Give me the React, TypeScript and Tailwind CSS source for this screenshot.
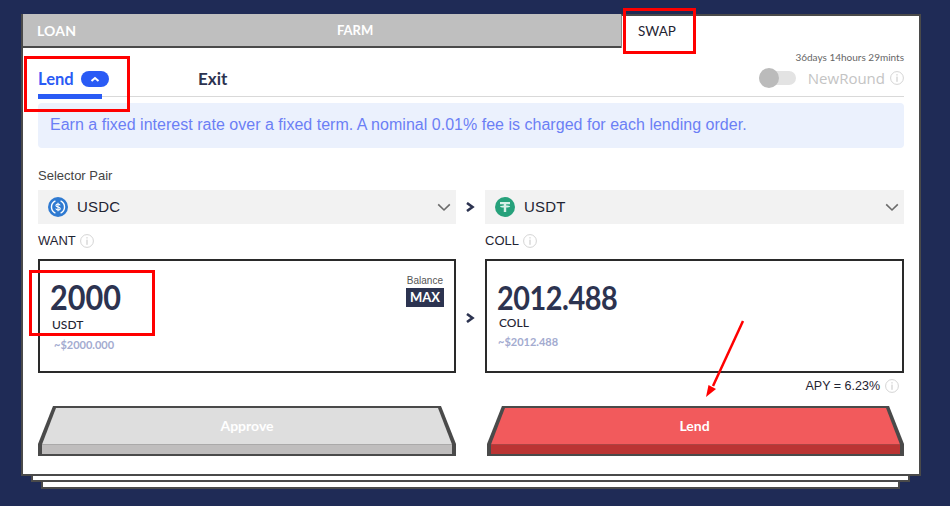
import React from "react";

const Info = ({ c = "#cfcfcf", s = 14 }: { c?: string; s?: number }) => (
  <svg width={s} height={s} viewBox="0 0 14 14" fill="none" className="shrink-0">
    <circle cx="7" cy="7" r="6.4" stroke={c} strokeWidth="0.9" />
    <rect x="6.4" y="5.6" width="1.2" height="5.2" fill={c} />
    <rect x="6.4" y="3.2" width="1.2" height="1.3" fill={c} />
  </svg>
);

const Chev = () => (
  <svg width="12" height="10" viewBox="0 0 12 10" className="shrink-0">
    <path d="M2 1 L7.5 5 L2 9" fill="none" stroke="#2c3350" strokeWidth="2.6" />
  </svg>
);

const Down = () => (
  <svg width="14" height="9" viewBox="0 0 14 9">
    <path d="M1.2 1.4 L7 7 L12.8 1.4" fill="none" stroke="#6b6b6b" strokeWidth="1.6" />
  </svg>
);

const Usdc = () => (
  <svg width="20" height="20" viewBox="0 0 20 20">
    <circle cx="10" cy="10" r="10" fill="#2f7ad1" />
    <path d="M7.4 3.9a6.7 6.7 0 0 0 0 12.2M12.6 3.9a6.7 6.7 0 0 1 0 12.2" fill="none" stroke="#fff" strokeWidth="1.4" />
    <path d="M12.1 8.4c-.2-1-1-1.4-2.1-1.4-1.2 0-2.1.6-2.1 1.5 0 2.1 4.3 1 4.3 3 0 1-1 1.500-2.200 1.500s-2-.5-2.200-1.500M10 5.800v8.400" fill="none" stroke="#fff" strokeWidth="1.1" />
  </svg>
);

const Usdt = () => (
  <svg width="20" height="20" viewBox="0 0 20 20">
    <circle cx="10" cy="10" r="10" fill="#26a17b" />
    <path d="M5 5h10v2.2h-3.8v1.2c2.2.1 3.9.6 3.9 1.1s-1.7 1-3.9 1.1V15H8.800v-4.400C6.600 10.500 4.900 10 4.900 9.500s1.700-1 3.900-1.100V7.200H5z" fill="#d8f0e8" />
  </svg>
);

const Select = ({ icon, label }: { icon: React.ReactNode; label: string }) => (
  <div className="h-[34px] bg-[#f2f2f2] flex items-center pl-[10px] pr-[5px]">
    {icon}
    <span className="ml-[9px] text-[15px] tracking-[0.2px] text-[#1f2433] flex-1">{label}</span>
    <Down />
  </div>
);

const Btn = ({ label, top, side, cls }: { label: string; top: string; side: string; cls: string }) => (
  <div className="relative h-[50px] flex items-start justify-center">
    <svg viewBox="0 0 418 50" preserveAspectRatio="none" className="absolute inset-0 w-full h-full">
      <path d="M0 38 L15 0 L403 0 L418 38 L418 50 L0 50 Z" fill="#4a4a4a" />
      <path d="M4 38.500 L18 2 L400 2 L414 38.500 Z" fill={top} />
      <rect x="4" y="38.500" width="410" height="9.500" fill={side} />
    </svg>
    <span className={`relative mt-[9px] text-[14px] font-bold text-white ${cls}`} style={{ fontFamily: "Lato, sans-serif" }}>{label}</span>
  </div>
);

export default function App() {
  return (
    <div className="relative w-[950px] h-[506px] overflow-hidden bg-[#1f2b56] pt-[14px] pl-[21px]" style={{ fontFamily: '"Liberation Sans", sans-serif' }}>
      <div className="absolute left-[41px] top-[40px] w-[859px] h-[449px] bg-white border-2 border-[#4a4a4a]" />
      <div className="absolute left-[31px] top-[30px] w-[879px] h-[452px] bg-white border-2 border-[#4a4a4a]" />

      <div className="relative w-[900px] h-[462px] bg-white border-x-2 border-b-2 border-[#4a4a4a]">
        <div className="flex h-[34px] -mx-[2px] pl-[2px]" style={{ fontFamily: "Lato, sans-serif" }}>
          <div className="w-[298px] pl-[14px] bg-[#bfbfbf] border-b-2 border-[#4a4a4a] text-white text-[14px] font-bold tracking-[0.2px] leading-[33px]">LOAN</div>
          <div className="w-[300px] pl-[16px] bg-[#bfbfbf] border-b-2 border-[#4a4a4a] text-white text-[13px] font-bold leading-[33px]">FARM</div>
          <div className="flex-1 pl-[16px] bg-white border-t-2 border-r-2 border-l border-[#4a4a4a] border-l-[#8a8a8a] text-[#1f2433] text-[13.500px] leading-[31px]">SWAP</div>
        </div>

        <div className="pl-[15px] pr-[15px]">
          <div className="relative h-[49px] border-b border-[#d9d9d9] flex items-start" style={{ fontFamily: "Lato, sans-serif" }}>
            <div className="w-[64px] h-[51px] pt-[21px] border-b-[5px] border-[#2a5bf5] flex items-start shrink-0">
              <span className="text-[16.500px] font-bold leading-[20px] text-[#2a5bf5]">Lend</span>
              <span className="ml-[7px] shrink-0 w-[28px] h-[16px] mt-[2px] rounded-full bg-[#2a5bf5] flex items-center justify-center">
                <svg width="10" height="7" viewBox="0 0 10 7"><path d="M1.500 5 L5 2 L8.500 5" fill="none" stroke="#fff" strokeWidth="2" /></svg>
              </span>
            </div>
            <span className="ml-[96px] pt-[21px] text-[17px] font-bold leading-[20px] text-[#2c3350]">Exit</span>
            <div className="ml-auto flex flex-col items-end">
              <span className="text-[10px] leading-[12px] mt-[3px] text-[#666]">36days 14hours 29mints</span>
              <div className="flex items-center mt-[5px]">
                <div className="relative w-[37px] h-[14px] rounded-full bg-[#e3e3e3]">
                  <div className="absolute left-0 -top-[3px] w-[20px] h-[20px] rounded-full bg-[#bbbbbb]" />
                </div>
                <span className="ml-[12px] text-[15px] leading-[20px] text-[#c4c4c4]" style={{ fontFamily: '"Open Sans", sans-serif' }}>NewRound</span>
                <span className="ml-[5px]"><Info /></span>
              </div>
            </div>
          </div>

          <div className="mt-[6px] h-[45px] rounded-[4px] bg-[#ebf1fd] pl-[12px] text-[16px] leading-[43px] tracking-[0.02px] text-[#6b7ff5]">
            Earn a fixed interest rate over a fixed term. A nominal 0.01% fee is charged for each lending order.
          </div>

          <div className="mt-[21px] text-[13px] leading-[14px] text-[#444]">Selector Pair</div>

          <div className="mt-[7px] grid grid-cols-[418px_29px_419px] items-center">
            <Select icon={<Usdc />} label="USDC" />
            <div className="flex justify-center"><Chev /></div>
            <Select icon={<Usdt />} label="USDT" />
          </div>

          <div className="mt-[7px] h-[18px] grid grid-cols-[418px_29px_419px] items-center text-[13px] text-[#1f2433]">
            <div className="flex items-center gap-[4px]">WANT <Info /></div>
            <div />
            <div className="flex items-center gap-[4px]">COLL <Info /></div>
          </div>

          <div className="mt-[10px] grid grid-cols-[418px_29px_419px] items-center">
            <div className="relative h-[114px] border-2 border-[#2a2a2a] pl-[10px] pt-[17px]">
              <div className="origin-left scale-x-[0.9] text-[34px] font-bold leading-[38px] text-[#2c3350]" style={{ fontFamily: "Lato, sans-serif" }}>2000</div>
              <div className="ml-[2px] mt-[1px] text-[12px] font-medium leading-[16px] text-[#1f2433]" style={{ fontFamily: "Lato, sans-serif" }}>USDT</div>
              <div className="ml-[4px] mt-[4px] text-[11px] font-bold leading-[16px] text-[#a3abd0]" style={{ fontFamily: "Lato, sans-serif" }}>~$2000.000</div>
              <div className="absolute right-[10px] top-[14px] flex flex-col items-end">
                <span className="mr-[1px] text-[10px] leading-[12px] text-[#555]">Balance</span>
                <span className="mt-[1px] w-[38px] h-[19px] bg-[#2c3350] text-white text-[13px] font-bold leading-[19px] text-center" style={{ fontFamily: "Lato, sans-serif" }}>MAX</span>
              </div>
            </div>
            <div className="flex justify-center pt-[4px]"><Chev /></div>
            <div className="h-[114px] border-2 border-[#2a2a2a] pl-[10px] pt-[19px]">
              <div className="origin-left scale-x-[0.9] text-[32px] font-bold leading-[35px] tracking-[-0.500px] text-[#2c3350]" style={{ fontFamily: "Lato, sans-serif" }}>2012.488</div>
              <div className="ml-[2px] text-[12px] font-medium leading-[16px] text-[#1f2433]" style={{ fontFamily: "Lato, sans-serif" }}>COLL</div>
              <div className="ml-[1px] mt-[3px] text-[11px] font-bold leading-[16px] text-[#a3abd0]" style={{ fontFamily: "Lato, sans-serif" }}>~$2012.488</div>
            </div>
          </div>

          <div className="mt-[5px] h-[16px] pr-[5px] flex items-center justify-end gap-[5px] text-[12.500px] text-[#1f2433]">
            APY = 6.23% <Info />
          </div>

          <div className="mt-[12px] grid grid-cols-[418px_31px_417px]">
            <Btn label="Approve" top="#dedede" side="#bfbdbd" cls="" />
            <div />
            <Btn label="Lend" top="#f25a5c" side="#bb3433" cls="mr-[2px]" />
          </div>
        </div>
      </div>

      <div className="absolute left-[623px] top-[8px] w-[73px] h-[46px] border-[3px] border-[#ff0000]" />
      <div className="absolute left-[24px] top-[56px] w-[106px] h-[56px] border-[3px] border-[#ff0000]" />
      <div className="absolute left-[29px] top-[270px] w-[126px] h-[66px] border-[3px] border-[#ff0000]" />
      <svg className="absolute left-[700px] top-[316px]" width="50" height="84" viewBox="0 0 50 84">
        <path d="M43 5 L13 70" stroke="#ff0000" strokeWidth="2.500" />
        <path d="M6 81 L8.500 69 L16 73 Z" fill="#ff0000" />
      </svg>
    </div>
  );
}
